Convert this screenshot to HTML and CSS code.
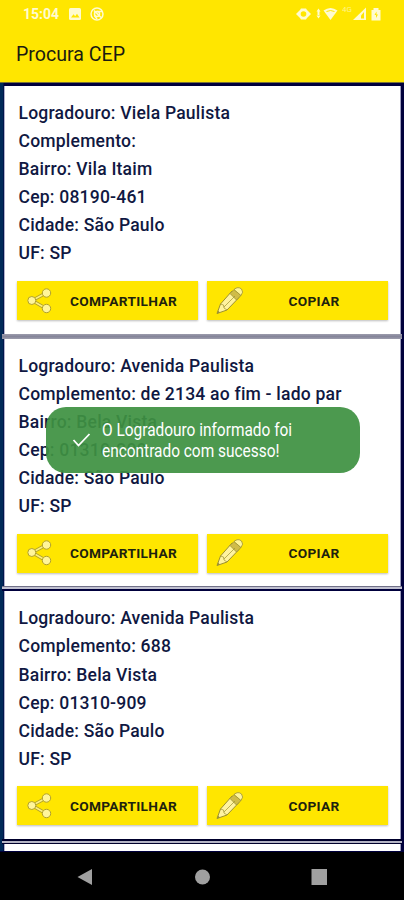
FILE: index.html
```html
<!DOCTYPE html>
<html lang="pt-BR">
<head>
<meta charset="utf-8">
<title>Procura CEP</title>
<link rel="stylesheet" href="styles.css">
</head>
<body>
<svg width="0" height="0" class="defs">
  <symbol id="share" viewBox="0 0 26 26">
    <path d="M19 5L5 12.500l14 8" fill="none" stroke="#b0a02c" stroke-width="3.200"/>
    <path d="M19 5L5 12.500l14 8" fill="none" stroke="#fff27c" stroke-width="1.500"/>
    <g fill="#fff59a" stroke="#b0a02c" stroke-width="1"><circle cx="4.800" cy="12.500" r="4"/><circle cx="19.500" cy="5" r="4.200"/><circle cx="19.500" cy="20.500" r="4.200"/></g>
  </symbol>
  <symbol id="pencil" viewBox="0 0 28 28">
    <path d="M1 26.500L4.500 17 16 4l7 6.500L11 23z" fill="#fff3a0" stroke="#9c9030" stroke-width="1"/>
    <path d="M14 6.500L18 2.500l7 6-4.500 4.500z" fill="#d0bc48" stroke="#9c9030" stroke-width=".8"/>
    <path d="M18 2.500q4-3.500 7.500-.500 2.500 3-.5 6.500z" fill="#fff59a" stroke="#9c9030" stroke-width=".8"/>
    <path d="M4.500 17l3 1 .5 3 3 2M8 20L19 9" fill="none" stroke="#9c9030" stroke-width=".7"/>
    <path d="M1 26.500l1-3 2 2z" fill="#9c9030"/>
  </symbol>
</svg>
<div class="phone">
  <header class="top">
    <div class="status">
      <span class="clock">15:04</span>
      <svg class="photo" width="12" height="12" viewBox="0 0 12 12"><rect width="12" height="12" rx="1.500" fill="#fffbd0"/><path d="M2 9.500l2.500-3.200 1.700 2 1.800-2.500 2.500 3.700z" fill="#ffe600"/></svg>
      <svg class="ring" width="14" height="14" viewBox="0 0 14 14" fill="none" stroke="#fffbd0" stroke-width="1.500"><circle cx="7" cy="7" r="6"/><circle cx="7" cy="7" r="2.500"/><path d="M4 3.500l7 7M7 4.500h5M4.500 8.500L7 12"/></svg>
      <svg class="signals" width="88" height="16" viewBox="0 0 88 16" fill="#fffbd0">
        <path d="M0 8l4-4 1-1.500h5L11 4l4 4-4 4-1 1.500H5L4 12z"/><circle cx="7.500" cy="8" r="2.800" fill="#ffe600"/>
        <path d="M20.500 5.500l2-3 2 3zM20.500 9.500l2 3 2-3zM21.500 5h2v5h-2z"/>
        <path d="M27.500 4.500q7-5 14 0l-7 9.500z"/><path d="M30.500 5.500q4-2 8 0" fill="none" stroke="#ffe600"/>
        <text x="46" y="6" font-size="8" opacity=".65">4G</text>
        <path d="M57 14L70 1.500V14z"/><path d="M65 12.500V9.500l3-3.500v6.500z" fill="#ffe600"/>
        <path d="M75.500 4h2V2h5v2h2v10.500h-9z"/><path d="M80.500 5.500l-2 3.500h1.500v3l2-3.500h-1.500z" fill="#ffe600"/>
      </svg>
    </div>
    <h1>Procura CEP</h1>
  </header>
  <main class="list">
    <article class="card">
      <p>Logradouro: Viela Paulista</p><p>Complemento:</p><p>Bairro: Vila Itaim</p><p>Cep: 08190-461</p><p>Cidade: São Paulo</p><p>UF: SP</p>
      <div class="actions"><button><svg class="share"><use href="#share"/></svg><span>COMPARTILHAR</span></button><button><svg class="pencil"><use href="#pencil"/></svg><span>COPIAR</span></button></div>
    </article>
    <div class="divider soft"></div>
    <article class="card">
      <p>Logradouro: Avenida Paulista</p><p>Complemento: de 2134 ao fim - lado par</p><p>Bairro: Bela Vista</p><p>Cep: 01310-200</p><p>Cidade: São Paulo</p><p>UF: SP</p>
      <div class="actions"><button><svg class="share"><use href="#share"/></svg><span>COMPARTILHAR</span></button><button><svg class="pencil"><use href="#pencil"/></svg><span>COPIAR</span></button></div>
    </article>
    <div class="divider mid"></div>
    <article class="card">
      <p>Logradouro: Avenida Paulista</p><p>Complemento: 688</p><p>Bairro: Bela Vista</p><p>Cep: 01310-909</p><p>Cidade: São Paulo</p><p>UF: SP</p>
      <div class="actions"><button><svg class="share"><use href="#share"/></svg><span>COMPARTILHAR</span></button><button><svg class="pencil"><use href="#pencil"/></svg><span>COPIAR</span></button></div>
    </article>
    <div class="divider"></div>
    <article class="card last"></article>
  </main>
  <nav class="nav">
    <svg width="404" height="48" viewBox="0 0 404 48" fill="#a0a0a0"><path d="M77.500 25L92 17v16z"/><circle cx="202.500" cy="25" r="7.500"/><rect x="311.500" y="17" width="15.500" height="16"/></svg>
  </nav>
  <div class="toast">
    <svg width="20" height="16" viewBox="0 0 20 16" fill="none" stroke="#fff" stroke-width="1.800"><path d="M1.500 8l5 5.500L17.500 2"/></svg>
    <div class="message">O Logradouro informado foi<br>encontrado com sucesso!</div>
  </div>
</div>
</body>
</html>
```
FILE: styles.css
```css
* { box-sizing: border-box; }
body { margin: 0; font-family: Roboto, sans-serif; }
.defs { position: absolute; }
.phone { position: relative; width: 404px; height: 900px; overflow: hidden; display: flex; flex-direction: column; background: #00003c; }
.top { height: 82px; flex: none; background: #ffe600; }
.status { height: 28px; display: flex; align-items: center; padding: 0 20px 0 23px; color: #fffbd0; }
.clock { width: 46px; font-size: 14px; font-weight: 700; }
.ring { margin-left: 9px; }
.signals { margin-left: auto; }
h1 { margin: 14px 0 0 16px; font-size: 19.600px; line-height: 26px; font-weight: 400; color: #1b1b10; }
.list { flex: none; height: 770px; overflow: hidden; padding: 3px 2px 0; border-top: 1px solid #777138; border-bottom: 1px solid #00003c; background: linear-gradient(90deg, #002a58 0 3px, #00003c 4px); }
.card { height: 247.700px; margin: 0 1px 0 2px; padding: 13px 12px 0 12px; background: #fff; border-left: 1px solid #b0b0cc; border-right: 1px solid #9c9cbc; }
.card p { margin: 0 0 0 1.500px; font-size: 17.550px; line-height: 28.100px; font-weight: 500; letter-spacing: .21px; color: #101842; white-space: nowrap; }
.divider { height: 5px; background: linear-gradient(#00002c 0 1.500px, #b4b4c4 1.500px 3.500px, #00002c 3.500px); }
.divider.soft { background: linear-gradient(#9c9cac, #85859a 50%, #9c9cac); }
.divider.mid { background: linear-gradient(#707088 0 1px, #c0c0d0 1px 2.500px, #00003c 2.500px); }
.actions { display: grid; grid-template-columns: 1fr 1fr; gap: 9px; margin-top: 13.500px; }
button { display: flex; align-items: center; height: 39px; padding: 0; border: 0; background: #ffe600; color: #1d220e; box-shadow: 0 1px 2px #0004; font: 700 13.700px Roboto, sans-serif; letter-spacing: .3px; }
button span { flex: 1; text-align: center; padding-right: 4px; }
.share { width: 26px; height: 26px; margin-left: 10px; }
.pencil { width: 28px; height: 28px; margin-left: 9px; }
.nav { height: 48px; flex: none; background: #000; }
.nav svg { display: block; }
.toast { position: absolute; left: 46px; top: 406.500px; width: 313.500px; height: 66px; display: flex; align-items: center; padding-left: 26px; border-radius: 20px; background: rgba(62, 145, 66, .93); color: #fff; }
.message { margin: 1px 0 0 10px; font-size: 18px; line-height: 21px; transform: scaleX(.857); transform-origin: left; white-space: nowrap; }
```
